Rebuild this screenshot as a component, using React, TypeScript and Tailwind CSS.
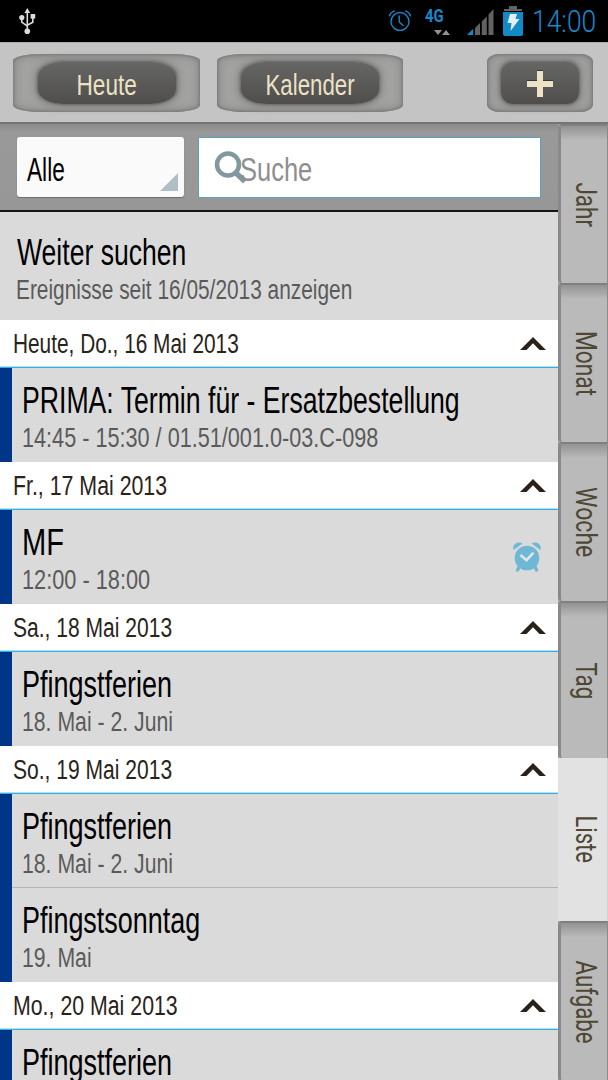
import { useLayoutEffect, useRef, useState } from "react";
import clsx from "clsx";

interface CondensedProps {
  children: string;
  width: number;
  className?: string;
  vertical?: boolean;
  centered?: boolean;
}

// Squeezes a line of text to the given advance, like a condensed face
function Condensed({ children, width, className, vertical, centered }: CondensedProps) {
  const ref = useRef<HTMLSpanElement>(null);
  const [scale, setScale] = useState(1);

  useLayoutEffect(() => {
    const el = ref.current;
    if (!el) return;
    setScale(width / (vertical ? el.offsetHeight : el.offsetWidth));
  }, [width, vertical]);

  return (
    <span
      ref={ref}
      className={clsx(
        "inline-block whitespace-nowrap",
        vertical && "[writing-mode:vertical-rl]",
        vertical || centered ? "origin-center" : "origin-left",
        className
      )}
      style={{ transform: vertical ? `scaleY(${scale})` : `scaleX(${scale})` }}
    >
      {children}
    </span>
  );
}

function StatusBar() {
  return (
    <div className="flex h-[42px] shrink-0 justify-between bg-black font-['Roboto',sans-serif]">
      <svg className="ml-[18px] mt-[7px]" width="19" height="28" viewBox="0 0 19 28" fill="none" stroke="#dcdcdc" strokeWidth="1.6">
        <path d="M9.3 4v20M3.8 10v5.2l5.5 4M14.8 10v5.2l-5.5 3" />
        <path d="M9.3 1l2.9 5H6.4z" fill="#dcdcdc" stroke="none" />
        <circle cx="3.8" cy="10.5" r="2.6" fill="#dcdcdc" stroke="none" />
        <circle cx="9.3" cy="24.3" r="2.8" fill="#dcdcdc" stroke="none" />
        <path d="M12.6 7h4.600v4.600h-4.600z" fill="#dcdcdc" stroke="none" />
      </svg>
      <div className="flex">
        <svg className="mt-[7px]" width="24" height="24" viewBox="0 0 24 24" fill="none" stroke="#1787cb" strokeWidth="1.4">
          <circle cx="12" cy="14.500" r="9" />
          <path d="M11.2 8.500v6.500l4.300 3.800M1.400 9.300C2 6.800 4 4.700 6.800 3.900M22.600 9.300C22 6.800 20 4.700 17.200 3.900" />
        </svg>
        <div className="ml-[13px] flex w-[26px] flex-col items-start pt-[6px]">
          <Condensed width={19} className="text-[18px] leading-[19px] font-bold text-[#1789cd]">4G</Condensed>
          <svg className="mt-[5px] ml-[9px]" width="16" height="5" viewBox="0 0 16 5" fill="#929292">
            <path d="M0 0h8L4 5zM8 5h8l-4-5z" />
          </svg>
        </div>
        <svg className="mt-2 ml-[16px]" width="28" height="28" viewBox="0 0 28 28" fill="#626262">
          <path d="M8 20l5-5v12H8zM14.800 13.500l5-5V27h-5zM21.500 6.500l5-5.500v26h-5z" />
          <path d="M0 27l6.200-6.200V27z" fill="#1787cb" />
        </svg>
        <svg className="mt-[6px] ml-2" width="20" height="30" viewBox="0 0 20 30">
          <path d="M6 0h8v3h5v2H1V3h5z" fill="#626262" />
          <path d="M0 6h20v22a2 2 0 0 1-2 2H2a2 2 0 0 1-2-2z" fill="#128ac8" />
          <path d="M7 8h7l-1.500 5h4L7.500 25l1-8H4.500z" fill="#e6f0f4" />
        </svg>
        <div className="ml-[9px] w-[76px]">
          <Condensed width={64} className="text-[31px] leading-[43px] font-light text-[#1787cb]">14:00</Condensed>
        </div>
      </div>
    </div>
  );
}

interface MetalButtonProps {
  children: React.ReactNode;
  className: string;
  small?: boolean;
}

function MetalButton({ children, className, small }: MetalButtonProps) {
  return (
    <button
      className={clsx(
        "flex h-[58px] items-center justify-center bg-[#a3a3a2] shadow-[inset_0_0_3px_1px_#777,inset_0_0_9px_3px_#8d8d8d]",
        small ? "rounded-[13px/8px]" : "rounded-[28px/7px]",
        className
      )}
    >
      <span
        className={clsx(
          "flex h-[42px] items-center justify-center bg-linear-to-b from-[#666664] to-[#4f4e4c] shadow-[0_0_3px_1px_#636362,0_0_7px_4px_#8c8c8b]",
          small ? "w-[78px] rounded-[12px]" : "w-[138px] rounded-[26px/14px]"
        )}
      >
        {children}
      </span>
    </button>
  );
}

function Toolbar() {
  return (
    <div className="flex h-[82px] shrink-0 items-center border-t border-b-2 border-t-[#adadad] border-b-[#747474] bg-[#c4c4c4] px-[13px] text-[29px] leading-[38px] text-[#ede2c5]">
      <MetalButton className="w-[187px]">
        <Condensed centered width={60} className="pt-1">Heute</Condensed>
      </MetalButton>
      <MetalButton className="ml-[17px] w-[186px]">
        <Condensed centered width={89} className="pt-1">Kalender</Condensed>
      </MetalButton>
      <MetalButton small className="mr-[2px] ml-auto w-[106px]">
        <svg className="mt-0.5" width="28" height="28" viewBox="0 0 28 28">
          <path d="M11 1h6v10h10v6H17v10h-6V17H1v-6h10z" fill="#ede2c5" />
          <path d="M11 0h6v1h-6zM1 10h10v1H1zM17 10h10v1H17z" fill="#393733" />
        </svg>
      </MetalButton>
    </div>
  );
}

function FilterBar() {
  return (
    <div className="flex h-[88px] shrink-0 gap-[14px] border-b-2 border-[#151515] bg-linear-to-b from-[#8b8b8b] via-[#999999] via-10% to-[#979797] pt-[13px] pl-[17px]">
      <div className="flex h-[60px] w-[167px] justify-between rounded-[3px] bg-[#fafafa] pl-[10px] shadow-[0_1px_1px_#6c6c6c]">
        <Condensed width={38} className="text-[34px] leading-[64px] text-black">Alle</Condensed>
        <svg className="mt-9 mr-[6px]" width="18" height="18" viewBox="0 0 18 18" fill="#b0bfc5">
          <path d="M18 0v18H0z" />
        </svg>
      </div>
      <div className="flex h-[61px] w-[343px] border border-[#5d9fbe] bg-white pl-[15px]">
        <svg className="mt-[12px] shrink-0" width="34" height="36" viewBox="0 0 34 36" fill="none" stroke="#82989f">
          <circle cx="14" cy="14.500" r="11" strokeWidth="4.500" />
          <path d="M21.500 22.500l9.500 9" strokeWidth="5.500" />
        </svg>
        <Condensed width={72} className="-ml-2 text-[34px] leading-[63px] text-[#8e8e8e]">Suche</Condensed>
      </div>
    </div>
  );
}

interface Line {
  text: string;
  width: number;
}

interface Entry {
  title: Line;
  detail?: Line;
  alarm?: boolean;
}

const ferien: Line = { text: "Pfingstferien", width: 150 };
const ferienDetail: Line = { text: "18. Mai - 2. Juni", width: 151 };

const days: { date: Line; entries: Entry[] }[] = [
  {
    date: { text: "Heute, Do., 16 Mai 2013", width: 226 },
    entries: [
      {
        title: { text: "PRIMA: Termin für - Ersatzbestellung", width: 438 },
        detail: { text: "14:45 - 15:30 / 01.51/001.0-03.C-098", width: 356 },
      },
    ],
  },
  {
    date: { text: "Fr., 17 Mai 2013", width: 154 },
    entries: [{ title: { text: "MF", width: 42 }, detail: { text: "12:00 - 18:00", width: 128 }, alarm: true }],
  },
  { date: { text: "Sa., 18 Mai 2013", width: 159 }, entries: [{ title: ferien, detail: ferienDetail }] },
  {
    date: { text: "So., 19 Mai 2013", width: 159 },
    entries: [
      { title: ferien, detail: ferienDetail },
      { title: { text: "Pfingstsonntag", width: 178 }, detail: { text: "19. Mai", width: 70 } },
    ],
  },
  { date: { text: "Mo., 20 Mai 2013", width: 165 }, entries: [{ title: ferien }] },
];

function AlarmIcon() {
  return (
    <svg className="mt-[31px] mr-[17px]" width="28" height="32" viewBox="0 0 28 32" fill="#6fb8d5">
      <circle cx="14" cy="17" r="12.300" />
      <path d="M.5 9C-1 3 5 0 9.500 2.500zM27.500 9C29 3 23 0 18.500 2.500z" />
      <path d="M6 26l-1.500 3M22 26l1.500 3" stroke="#6fb8d5" strokeWidth="3.500" strokeLinecap="round" />
      <path d="M7.500 14l6 5.200 7-7.500" fill="none" stroke="#e0e5e7" strokeWidth="2.600" />
    </svg>
  );
}

function EntryRow({ entry, divided }: { entry: Entry; divided: boolean }) {
  return (
    <div
      className={clsx(
        "flex h-[94px] shrink-0 justify-between border-l-12 border-l-[#003588] bg-[#dadada] pl-[10px]",
        divided && "shadow-[inset_0_-1px_#b4b4b4]"
      )}
    >
      <div className="flex flex-col items-start pt-3">
        <Condensed width={entry.title.width} className="text-[36px] leading-[41px] text-black">
          {entry.title.text}
        </Condensed>
        {entry.detail && (
          <Condensed width={entry.detail.width} className="mt-px text-[27px] leading-8 text-[#5a5a5a]">
            {entry.detail.text}
          </Condensed>
        )}
      </div>
      {entry.alarm && <AlarmIcon />}
    </div>
  );
}

function DayHeader({ date }: { date: Line }) {
  return (
    <div className="flex h-12 shrink-0 items-center justify-between border-b border-b-[#2fb0e6] bg-white pr-3 pl-[13px] shadow-[inset_0_-1px_#b5e2f4]">
      <Condensed width={date.width} className="pt-px text-[27px] leading-[46px] text-[#2a231a]">{date.text}</Condensed>
      <svg width="26" height="13" viewBox="0 0 26 13" fill="#2a211a">
        <path d="M0 13L13 0l13 13h-6.500L13 6.200 6.500 13z" />
      </svg>
    </div>
  );
}

function Agenda() {
  return (
    <div className="flex min-h-0 flex-1 flex-col overflow-hidden bg-[#dadada]">
      <div className="flex h-[108px] shrink-0 flex-col items-start pt-5 pl-4">
        <Condensed width={169} className="ml-px text-[36px] leading-[41px] text-black">Weiter suchen</Condensed>
        <Condensed width={336} className="text-[27px] leading-[34px] text-[#5a5a5a]">
          Ereignisse seit 16/05/2013 anzeigen
        </Condensed>
      </div>
      {days.map((day) => (
        <div key={day.date.text} className="shrink-0">
          <DayHeader date={day.date} />
          {day.entries.map((entry, i) => (
            <EntryRow key={entry.title.text} entry={entry} divided={i < day.entries.length - 1} />
          ))}
        </div>
      ))}
    </div>
  );
}

const tabs = [
  { label: "Jahr", width: 45, height: "h-[159px]" },
  { label: "Monat", width: 65, height: "h-[159px]" },
  { label: "Woche", width: 70, height: "h-[159px]" },
  { label: "Tag", width: 37, height: "h-[157px]" },
  { label: "Liste", width: 48, height: "h-[163px]", active: true },
  { label: "Aufgabe", width: 83, height: "h-[160px]" },
];

function ViewTabs() {
  return (
    <nav className="flex w-[50px] shrink-0 flex-col overflow-hidden bg-[#a8a8a8] font-['Roboto',sans-serif]">
      {tabs.map((tab) => (
        <div
          key={tab.label}
          className={clsx(
            "flex shrink-0 items-center justify-center text-[29px] leading-8 text-[#4d4733]",
            tab.height,
            tab.active
              ? "border-r border-[#d2d2d2] bg-[#e2e2e2] pl-[6px]"
              : "rounded-l-[4px] border-t-2 border-r border-l-3 border-t-[#808080] border-r-[#8a8a8a] border-l-[#898989] bg-linear-to-b from-[#939393] via-[#bababa] via-9% to-[#bababa] pl-[3px]"
          )}
        >
          <Condensed vertical width={tab.width}>{tab.label}</Condensed>
        </div>
      ))}
    </nav>
  );
}

export default function App() {
  return (
    <div className="flex h-[1080px] w-[608px] flex-col overflow-hidden font-['Liberation_Sans',sans-serif]">
      <StatusBar />
      <Toolbar />
      <div className="flex min-h-0 flex-1">
        <div className="flex min-w-0 flex-1 flex-col">
          <FilterBar />
          <Agenda />
        </div>
        <ViewTabs />
      </div>
    </div>
  );
}
